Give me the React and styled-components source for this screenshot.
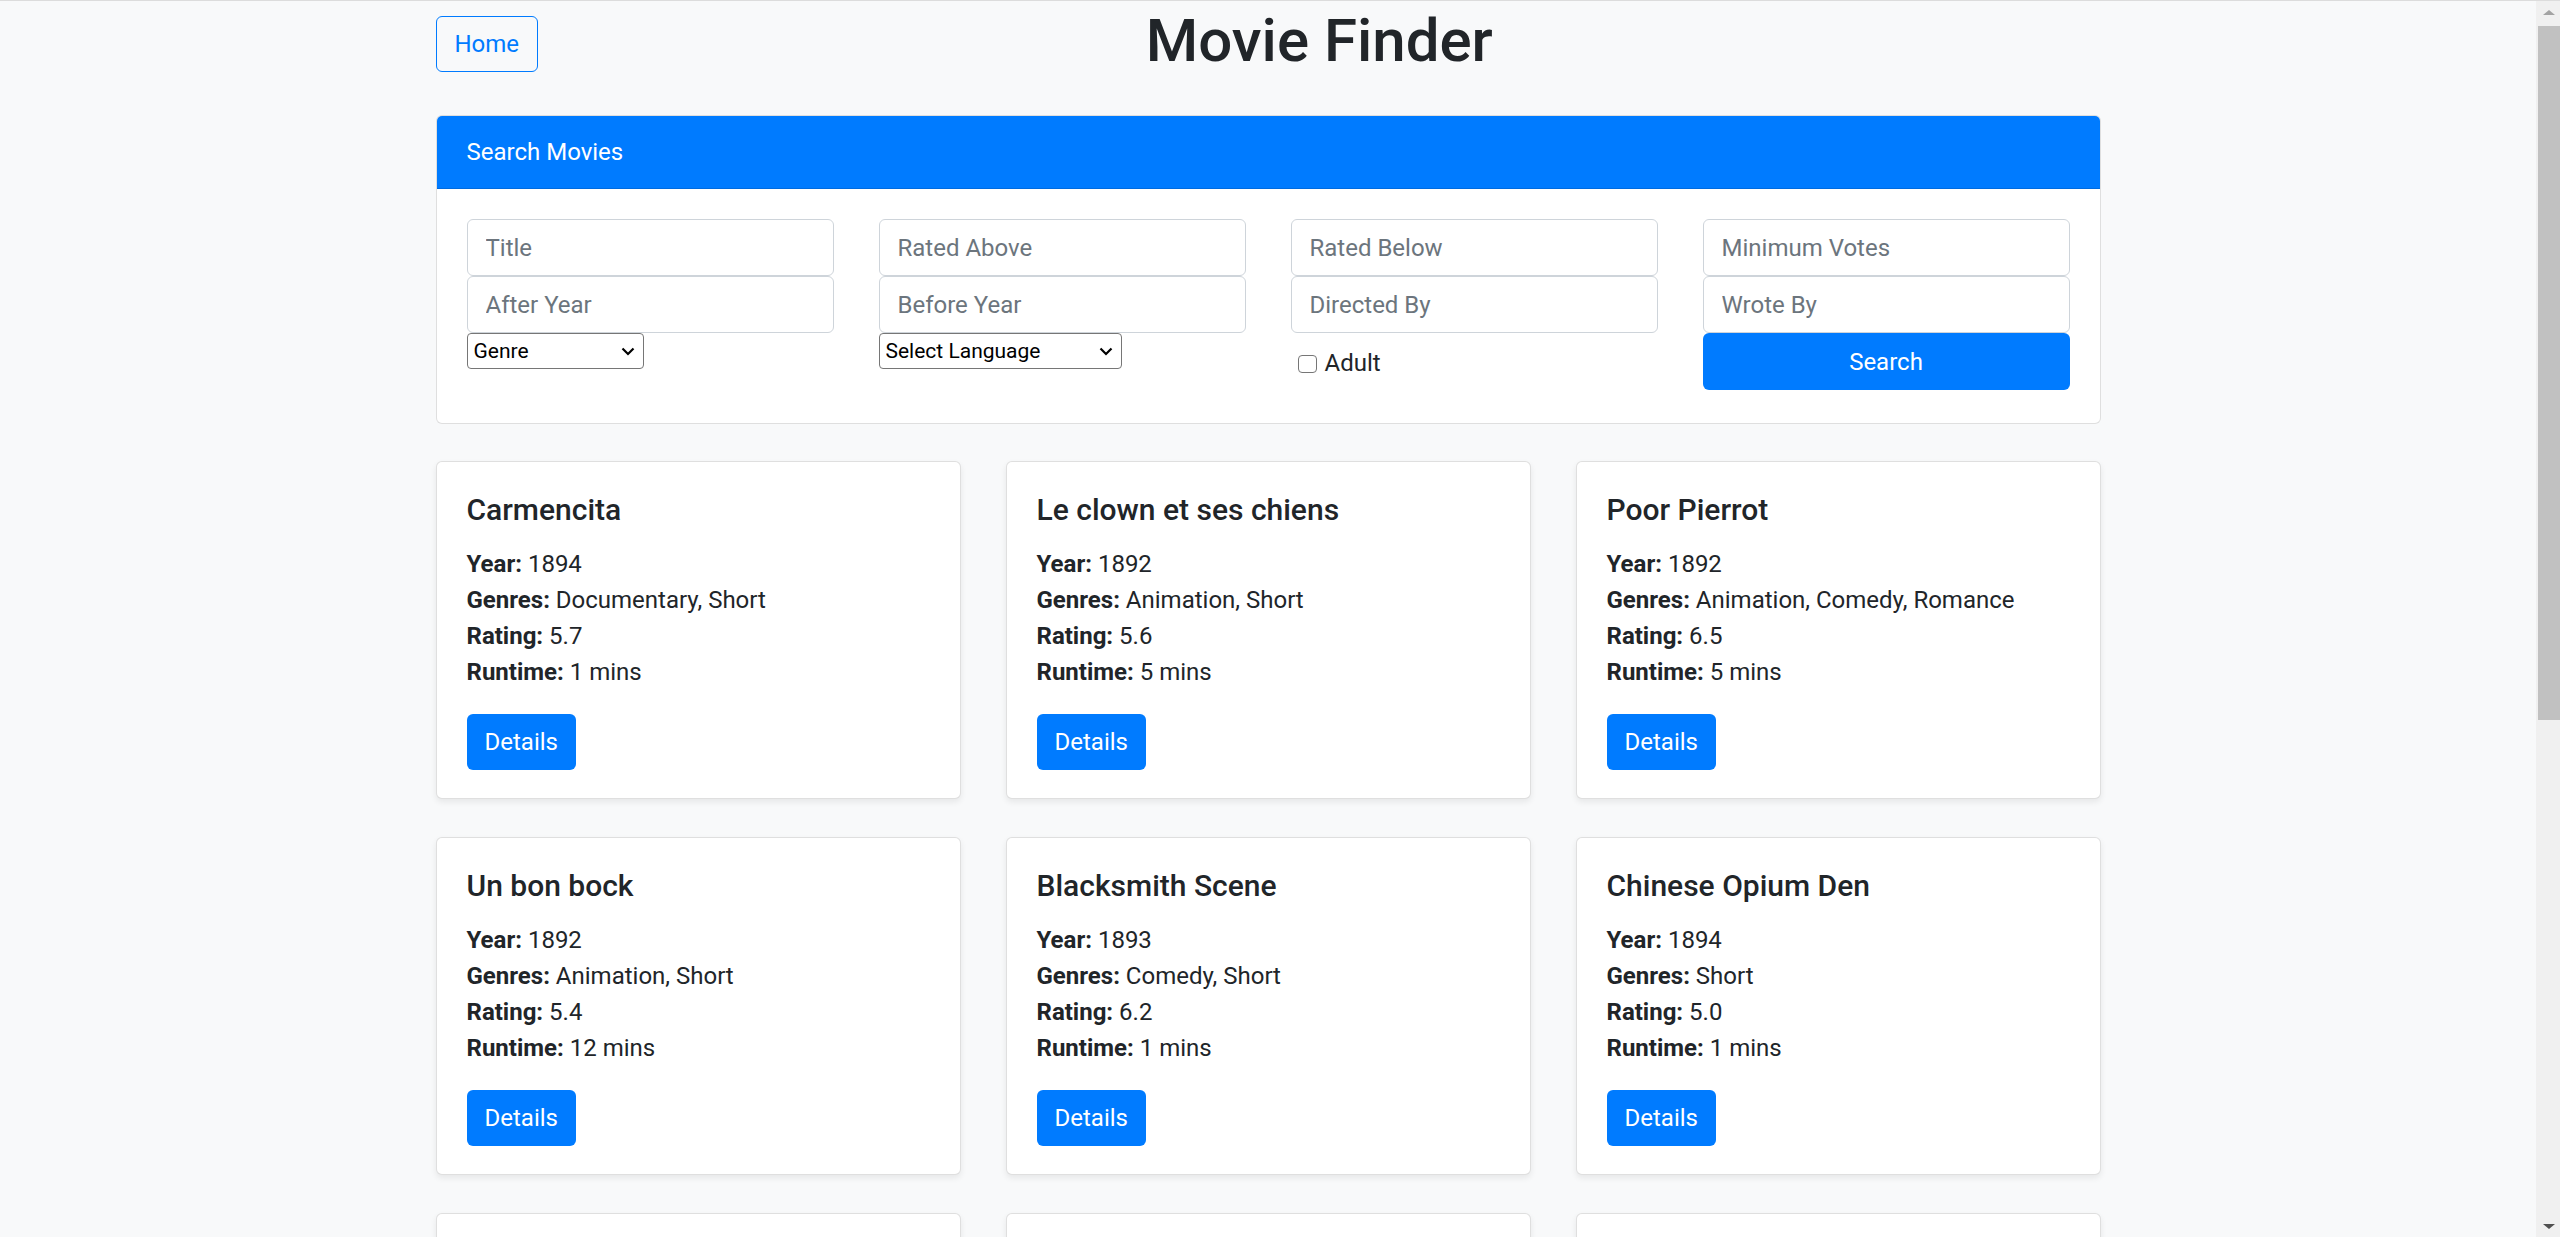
import styled, { createGlobalStyle } from "styled-components";

const FONT = `Roboto, "Segoe UI", "Liberation Sans", sans-serif`;

const movies = [
    { title: "Carmencita", year: 1894, genres: "Documentary, Short", rating: "5.7", runtime: 1 },
    { title: "Le clown et ses chiens", year: 1892, genres: "Animation, Short", rating: "5.6", runtime: 5 },
    { title: "Poor Pierrot", year: 1892, genres: "Animation, Comedy, Romance", rating: "6.5", runtime: 5 },
    { title: "Un bon bock", year: 1892, genres: "Animation, Short", rating: "5.4", runtime: 12 },
    { title: "Blacksmith Scene", year: 1893, genres: "Comedy, Short", rating: "6.2", runtime: 1 },
    { title: "Chinese Opium Den", year: 1894, genres: "Short", rating: "5.0", runtime: 1 },
    { title: "Corbett and Courtney Before the Kinetograph", year: 1894, genres: "Short, Sport", rating: "5.3", runtime: 1 },
    { title: "Edison Kinetoscopic Record of a Sneeze", year: 1894, genres: "Documentary, Short", rating: "5.4", runtime: 1 },
    { title: "Miss Jerry", year: 1894, genres: "Romance", rating: "5.4", runtime: 45 },
]

const App = () => {
    return (
        <>
        <GlobalStyle />
        <Frame>
            <Page>
                <Container>
                    <Header>
                        <HomeButton>Home</HomeButton>
                        <Title>Movie Finder</Title>
                    </Header>

                    <SearchCard>
                        <SearchHeader>Search Movies</SearchHeader>
                        <SearchBody>
                            <Column>
                                <Input placeholder="Title" />
                                <Input placeholder="After Year" />
                                <SelectWrap>
                                    <Select $width={177}>
                                        <option>Genre</option>
                                    </Select>
                                    <Chevron />
                                </SelectWrap>
                            </Column>
                            <Column>
                                <Input placeholder="Rated Above" />
                                <Input placeholder="Before Year" />
                                <SelectWrap>
                                    <Select $width={243}>
                                        <option>Select Language</option>
                                    </Select>
                                    <Chevron />
                                </SelectWrap>
                            </Column>
                            <Column>
                                <Input placeholder="Rated Below" />
                                <Input placeholder="Directed By" />
                                <CheckRow>
                                    <Checkbox type="checkbox" />
                                    Adult
                                </CheckRow>
                            </Column>
                            <Column>
                                <Input placeholder="Minimum Votes" />
                                <Input placeholder="Wrote By" />
                                <SearchButton>Search</SearchButton>
                            </Column>
                        </SearchBody>
                    </SearchCard>

                    <MovieGrid>
                        {movies.map((movie) => {
                            return (
                                <MovieCard key={movie.title}>
                                    <MovieTitle>{movie.title}</MovieTitle>
                                    <Info>
                                        <div><strong>Year:</strong> {movie.year}</div>
                                        <div><strong>Genres:</strong> {movie.genres}</div>
                                        <div><strong>Rating:</strong> {movie.rating}</div>
                                        <div><strong>Runtime:</strong> {movie.runtime} mins</div>
                                    </Info>
                                    <DetailsButton>Details</DetailsButton>
                                </MovieCard>
                            )
                        })}
                    </MovieGrid>
                </Container>
            </Page>
            <ScrollTrack>
                <ArrowUp />
                <Thumb />
                <ArrowDown />
            </ScrollTrack>
        </Frame>
        </>
    )
}

export default App

const Chevron = () => (
    <ChevronIcon width="14" height="9" viewBox="0 0 14 9">
        <path d="M1.5 1.5 L7 7 L12.5 1.5" fill="none" stroke="#000" strokeWidth="2.2" />
    </ChevronIcon>
)

const GlobalStyle = createGlobalStyle`
html, body {
    margin: 0;
    height: 100%;
    overflow: hidden;
}
body {
    background: #f8f9fa;
    color: #212529;
    font-family: ${FONT};
    font-size: 24px;
    line-height: 1.5;
}
* {
    box-sizing: border-box;
}
`

const Frame = styled.div`
display: flex;
height: 100vh;
border-top: 1px solid #dcdcdc;
`

const Page = styled.div`
flex: 1;
overflow: hidden;
`

const ScrollTrack = styled.div`
width: 24px;
background: #f0f0f0;
display: flex;
flex-direction: column;
align-items: flex-end;
`

const ArrowUp = styled.div`
margin: 9px 5px 0 0;
width: 0;
height: 0;
border-left: 6px solid transparent;
border-right: 6px solid transparent;
border-bottom: 5px solid #a3a3a3;
`

const ArrowDown = styled.div`
margin: auto 5px 8px 0;
width: 0;
height: 0;
border-left: 6px solid transparent;
border-right: 6px solid transparent;
border-top: 5px solid #505050;
`

const Thumb = styled.div`
margin-top: 11px;
width: 22px;
height: 694px;
background: #c1c1c1;
`

const Container = styled.div`
max-width: 1710px;
margin: 0 auto;
padding: 0 22.5px;
`

const Header = styled.div`
display: flex;
align-items: flex-start;
padding-top: 1px;
`

const HomeButton = styled.button`
margin-top: 14px;
height: 56px;
padding: 0 18px;
font-family: ${FONT};
font-size: 24px;
color: #007bff;
background: transparent;
border: 1.5px solid #007bff;
border-radius: 6px;
`

const Title = styled.h1`
flex: 1;
margin: 0;
padding-top: 3px;
text-align: center;
font-size: 60px;
font-weight: 500;
line-height: 1.2;
`

const SearchCard = styled.div`
margin-top: 38px;
background: #fff;
border: 1.5px solid rgba(0, 0, 0, 0.125);
border-radius: 6px;
overflow: hidden;
`

const SearchHeader = styled.div`
background: #007bff;
color: #fff;
padding: 18px 30px;
line-height: 36px;
border-bottom: 1.5px solid rgba(0, 0, 0, 0.125);
`

const SearchBody = styled.div`
padding: 30px 30px 33px;
display: grid;
grid-template-columns: repeat(4, 1fr);
column-gap: 45px;
`

const Column = styled.div`
display: flex;
flex-direction: column;
align-items: flex-start;
`

const Input = styled.input`
width: 100%;
height: 57px;
padding: 9px 18px;
font-family: ${FONT};
font-size: 24px;
color: #495057;
background: #fff;
border: 1.5px solid #ced4da;
border-radius: 6px;
outline: none;

&::placeholder {
    color: #6c757d;
}
`

const SelectWrap = styled.div`
position: relative;
display: inline-flex;
`

const Select = styled.select`
appearance: none;
width: ${(p) => p.$width}px;
height: 36px;
padding: 0 30px 0 6px;
font-family: ${FONT};
font-size: 21px;
color: #000;
background: #fff;
border: 1.5px solid #767676;
border-radius: 4px;
`

const ChevronIcon = styled.svg`
position: absolute;
right: 9px;
top: 14px;
pointer-events: none;
`

const CheckRow = styled.label`
display: flex;
align-items: center;
margin-top: 12px;
line-height: 36px;
`

const Checkbox = styled.input`
appearance: none;
width: 19px;
height: 18px;
margin: 2px 8px 0 7px;
border: 1.5px solid #767676;
border-radius: 4px;
background: #fff;
`

const SearchButton = styled.button`
width: 100%;
height: 57px;
font-family: ${FONT};
font-size: 24px;
color: #fff;
background: #007bff;
border: none;
border-radius: 6px;
`

const MovieGrid = styled.div`
margin-top: 36.5px;
display: grid;
grid-template-columns: repeat(3, 1fr);
column-gap: 45px;
row-gap: 37.5px;
`

const MovieCard = styled.div`
background: #fff;
border: 1.5px solid rgba(0, 0, 0, 0.125);
border-radius: 6px;
box-shadow: 0 3px 6px rgba(0, 0, 0, 0.075);
padding: 30px 30px 28.5px;
`

const MovieTitle = styled.h5`
margin: 0 0 18px;
font-size: 30px;
font-weight: 500;
line-height: 1.2;
`

const Info = styled.div`
margin-bottom: 24px;
line-height: 36px;

strong {
    font-weight: 700;
}
`

const DetailsButton = styled.button`
height: 56px;
padding: 0 18px;
font-family: ${FONT};
font-size: 24px;
color: #fff;
background: #007bff;
border: none;
border-radius: 6px;
`
